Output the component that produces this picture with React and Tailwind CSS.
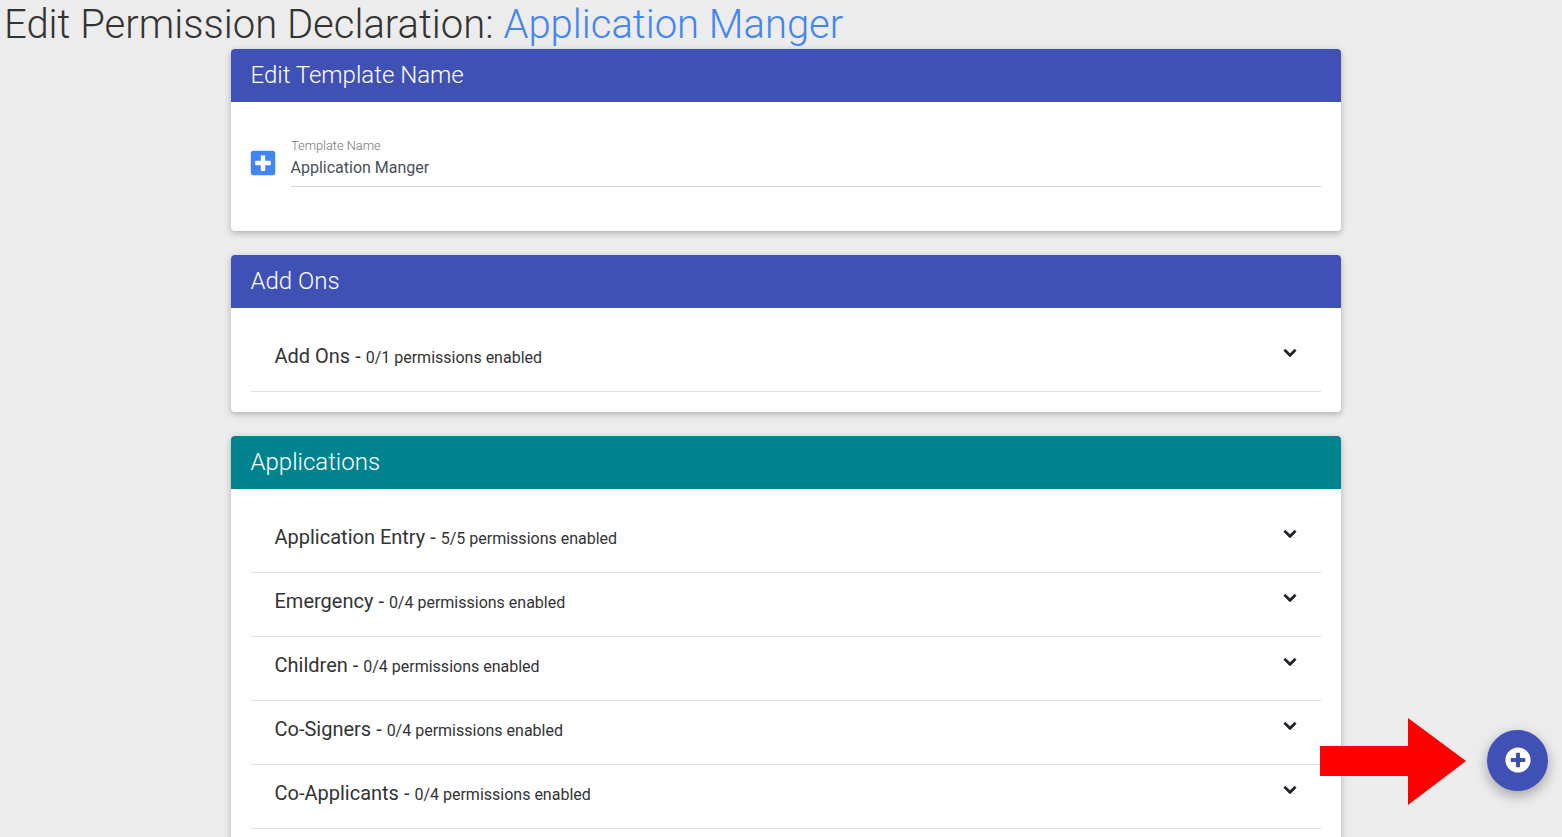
import React from 'react';
import { FaChevronDown, FaPlusCircle, FaPlusSquare } from 'react-icons/fa';

const font = { fontFamily: 'Roboto, sans-serif' };

const Row = ({ name, count }) => (
  <div className="flex h-16 items-start justify-between border-b border-[#e0e0e0] pt-[14px] pr-6 pl-[23.5px] text-[#333333]">
    <div className="leading-[30px]">
      <span className="text-xl">{name} - </span>
      <span className="text-base">{count} permissions enabled</span>
    </div>
    <FaChevronDown className="mt-[4px] stroke-[30] text-[#212529]" size={14} />
  </div>
);

const Card = ({ title, color, children }) => (
  <section className="mb-6 overflow-hidden rounded-[4px] bg-white shadow-[0_2px_5px_0_rgba(0,0,0,0.16),0_2px_10px_0_rgba(0,0,0,0.12)]">
    <div className={`flex h-[53px] items-center pr-5 pb-[2px] pl-[19.5px] text-2xl font-light text-white ${color}`}>{title}</div>
    <div className="p-5">{children}</div>
  </section>
);

const App = () => {
  return (
    <div style={font} className="relative h-[837px] w-full overflow-hidden bg-[#ececec]">
      <h1 className="h-[49px] pl-[4px] text-[40px] leading-[49px] font-light text-[#333333]">
        Edit Permission Declaration: <span className="text-[#4285f4]">Application Manger</span>
      </h1>

      <main className="ml-[231px] w-[1110px]">
        <Card title="Edit Template Name" color="bg-[#3f51b5]">
          <div className="flex h-[89px] items-start">
            <FaPlusSquare className="mt-[27px] ml-[-2px] shrink-0 text-[#4285f4]" size={28} />
            <div className="ml-[14px] flex-1 pt-[15px]">
              <label className="block text-[12.8px] leading-[18px] font-light text-[#757575]">Template Name</label>
              <div className="h-[32px] border-b border-[#ced4da] pt-[1px] text-base leading-6 text-[#495057]">
                <span className="ml-[-0.5px]">Application Manger</span>
              </div>
            </div>
          </div>
        </Card>

        <Card title="Add Ons" color="bg-[#3f51b5]">
          <Row name="Add Ons" count="0/1" />
        </Card>

        <Card title="Applications" color="bg-[#00838f]">
          <Row name="Application Entry" count="5/5" />
          <Row name="Emergency" count="0/4" />
          <Row name="Children" count="0/4" />
          <Row name="Co-Signers" count="0/4" />
          <Row name="Co-Applicants" count="0/4" />
        </Card>
      </main>

      {/* red arrow pointing at the button */}
      <svg className="absolute top-[717px] left-[1319px]" width="149" height="90" viewBox="0 0 149 90">
        <polygon points="1,29 89,29 89,1 147,44 89,88 89,59 1,59" fill="#fe0000" />
      </svg>

      <button className="absolute top-[730px] left-[1487px] flex h-[61px] w-[61px] items-center justify-center rounded-full bg-[#3f51b5] pb-[1px] text-white shadow-[0_5px_11px_0_rgba(0,0,0,0.18),0_4px_15px_0_rgba(0,0,0,0.15)]">
        <FaPlusCircle size={26} />
      </button>
    </div>
  );
};

export default App;
